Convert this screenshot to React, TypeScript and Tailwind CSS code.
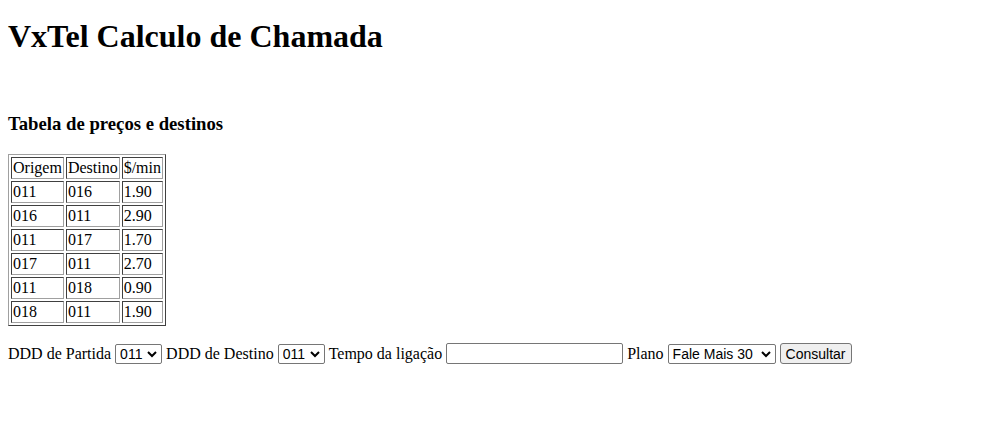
import React from 'react';

const rows = [
  ['011', '016', '1.90'],
  ['016', '011', '2.90'],
  ['011', '017', '1.70'],
  ['017', '011', '2.70'],
  ['011', '018', '0.90'],
  ['018', '011', '1.90'],
];

const Chevron = () => (
  <svg width="10" height="7" viewBox="0 0 10 7" className="absolute right-[5px] top-[7px]">
    <path d="M1 1 L5 5 L9 1" fill="none" stroke="#000" strokeWidth="2" />
  </svg>
);

const FakeSelect = ({ value, width }: { value: string; width: string }) => (
  <span className={`relative inline-block align-middle ${width}`}>
    <select
      className="appearance-none h-[20px] w-full border border-[#767676] rounded-[2px] bg-white pl-[4px] pr-[18px] text-[14px] leading-[18px] text-black"
      style={{ fontFamily: '"Liberation Sans", Arial, sans-serif' }}
      defaultValue={value}
    >
      <option>{value}</option>
    </select>
    <Chevron />
  </span>
);

export default function App() {
  return (
    <div className="px-2 pb-2 text-black bg-white min-h-screen" style={{ fontFamily: '"Liberation Serif", "Times New Roman", serif' }}>
      <h1 className="pt-[18px] text-[32px] font-bold leading-[37px]">VxTel Calculo de Chamada</h1>

      <h3 className="mt-[58px] text-[18.72px] font-bold leading-[22px]">Tabela de preços e destinos</h3>

      <table className="mt-[19px] border-separate border-spacing-[2px] border border-t-[#a0a0a0] border-l-[#a0a0a0] border-b-[#404040] border-r-[#404040] text-[16px] leading-[18px]">
        <thead>
          <tr>
            {['Origem', 'Destino', '$/min'].map(h => (
              <th key={h} className="font-normal text-left p-px border border-t-[#404040] border-l-[#404040] border-b-[#a0a0a0] border-r-[#a0a0a0]">{h}</th>
            ))}
          </tr>
        </thead>
        <tbody>
          {rows.map((r, i) => (
            <tr key={i}>
              {r.map((c, j) => (
                <td key={j} className="p-px border border-t-[#404040] border-l-[#404040] border-b-[#a0a0a0] border-r-[#a0a0a0]">{c}</td>
              ))}
            </tr>
          ))}
        </tbody>
      </table>

      <div className="mt-[17px] text-[16px] leading-[20px] flex items-center gap-[4px]">
        <span>DDD de Partida</span>
        <FakeSelect value="011" width="w-[47px]" />
        <span>DDD de Destino</span>
        <FakeSelect value="011" width="w-[47px]" />
        <span>Tempo da ligação</span>
        <input type="text" className="h-[21px] w-[177px] border border-[#767676] rounded-[2px] bg-white" />
        <span>Plano</span>
        <FakeSelect value="Fale Mais 30" width="w-[108px]" />
        <button
          className="h-[21px] px-[5px] border border-[#767676] rounded-[3px] bg-[#efefef] text-[14px] leading-[18px]"
          style={{ fontFamily: '"Liberation Sans", Arial, sans-serif' }}
        >
          Consultar
        </button>
      </div>
    </div>
  );
}
